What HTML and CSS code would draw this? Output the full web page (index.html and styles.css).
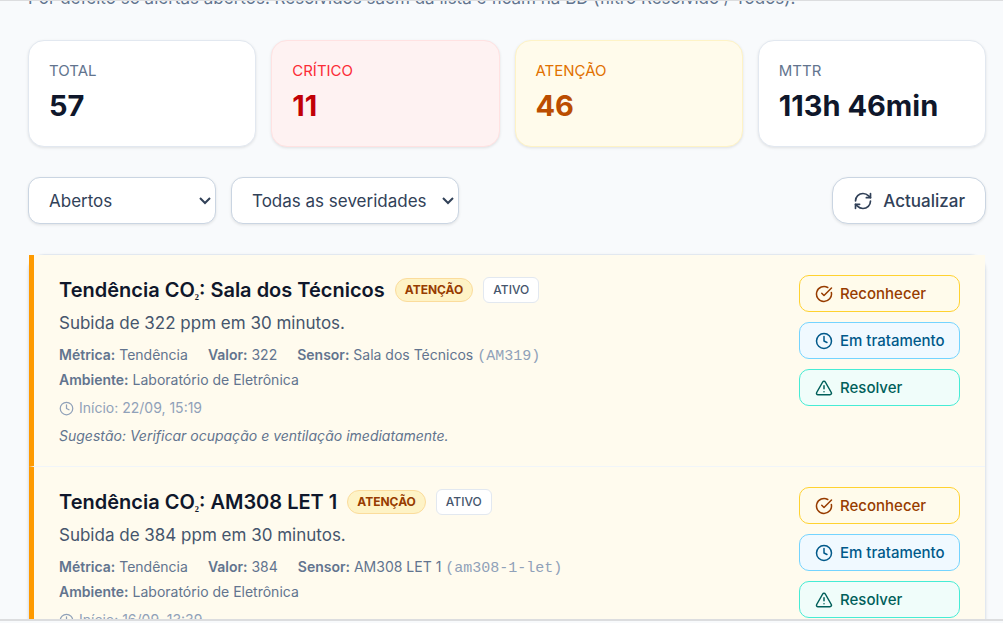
FILE: index.html
```html
<!DOCTYPE html>
<html lang="pt">
<head>
    <meta charset="UTF-8">
    <meta name="viewport" content="width=device-width, initial-scale=1.0">
    <title>Alertas</title>
    <link rel="stylesheet" href="styles.css">
</head>
<body>
    <svg class="sprite" aria-hidden="true">
        <symbol id="i-refresh" viewBox="0 0 24 24">
            <path d="M3 12a9 9 0 0 1 9-9 9.75 9.75 0 0 1 6.74 2.74L21 8"/>
            <path d="M21 3v5h-5"/>
            <path d="M21 12a9 9 0 0 1-9 9 9.75 9.75 0 0 1-6.74-2.74L3 16"/>
            <path d="M8 16H3v5"/>
        </symbol>
        <symbol id="i-clock" viewBox="0 0 24 24">
            <circle cx="12" cy="12" r="10"/>
            <path d="M12 6v6l4 2"/>
        </symbol>
        <symbol id="i-check" viewBox="0 0 24 24">
            <path d="M21.801 10A10 10 0 1 1 17 3.335"/>
            <path d="m9 11 3 3L22 4"/>
        </symbol>
        <symbol id="i-alert" viewBox="0 0 24 24">
            <path d="m21.73 18-8-14a2 2 0 0 0-3.48 0l-8 14A2 2 0 0 0 4 21h16a2 2 0 0 0 1.73-3"/>
            <path d="M12 9v4"/>
            <path d="M12 17h.01"/>
        </symbol>
    </svg>

    <main class="page">
        <p class="intro">Por defeito só alertas abertos. Resolvidos saem da lista e ficam na BD (filtro Resolvido / Todos).</p>

        <section class="stats">
            <div class="stat">
                <div class="stat-label">TOTAL</div>
                <div class="stat-value">57</div>
            </div>
            <div class="stat critical">
                <div class="stat-label">CRÍTICO</div>
                <div class="stat-value">11</div>
            </div>
            <div class="stat warning">
                <div class="stat-label">ATENÇÃO</div>
                <div class="stat-value">46</div>
            </div>
            <div class="stat">
                <div class="stat-label">MTTR</div>
                <div class="stat-value">113h 46min</div>
            </div>
        </section>

        <div class="filters">
            <select class="select-state" aria-label="Estado">
                <option>Abertos</option>
                <option>Resolvido</option>
                <option>Todos</option>
            </select>
            <select class="select-severity" aria-label="Severidade">
                <option>Todas as severidades</option>
                <option>Crítico</option>
                <option>Atenção</option>
            </select>
            <button type="button" class="refresh"><svg><use href="#i-refresh"/></svg>Actualizar</button>
        </div>

        <section class="alerts">
            <article class="alert">
                <div class="alert-body">
                    <div class="alert-head">
                        <h3>Tendência CO<span class="sub">₂</span>: Sala dos Técnicos</h3>
                        <span class="badge severity">ATENÇÃO</span>
                        <span class="badge state">ATIVO</span>
                    </div>
                    <p class="message">Subida de 322 ppm em 30 minutos.</p>
                    <div class="details">
                        <span><b>Métrica:</b> Tendência</span>
                        <span><b>Valor:</b> 322</span>
                        <span><b>Sensor:</b> Sala dos Técnicos <code>(AM319)</code></span>
                        <span><b>Ambiente:</b> Laboratório de Eletrônica</span>
                    </div>
                    <div class="started"><svg><use href="#i-clock"/></svg>Início: 22/09, 15:19</div>
                    <p class="hint">Sugestão: Verificar ocupação e ventilação imediatamente.</p>
                </div>
                <div class="actions">
                    <button type="button" class="ack"><svg><use href="#i-check"/></svg>Reconhecer</button>
                    <button type="button" class="progress"><svg><use href="#i-clock"/></svg>Em tratamento</button>
                    <button type="button" class="resolve"><svg><use href="#i-alert"/></svg>Resolver</button>
                </div>
            </article>

            <article class="alert">
                <div class="alert-body">
                    <div class="alert-head">
                        <h3>Tendência CO<span class="sub">₂</span>: AM308 LET 1</h3>
                        <span class="badge severity">ATENÇÃO</span>
                        <span class="badge state">ATIVO</span>
                    </div>
                    <p class="message">Subida de 384 ppm em 30 minutos.</p>
                    <div class="details">
                        <span><b>Métrica:</b> Tendência</span>
                        <span><b>Valor:</b> 384</span>
                        <span><b>Sensor:</b> AM308 LET 1 <code>(am308-1-let)</code></span>
                        <span><b>Ambiente:</b> Laboratório de Eletrônica</span>
                    </div>
                    <div class="started"><svg><use href="#i-clock"/></svg>Início: 16/09, 13:39</div>
                    <p class="hint">Sugestão: Verificar ocupação e ventilação imediatamente.</p>
                </div>
                <div class="actions">
                    <button type="button" class="ack"><svg><use href="#i-check"/></svg>Reconhecer</button>
                    <button type="button" class="progress"><svg><use href="#i-clock"/></svg>Em tratamento</button>
                    <button type="button" class="resolve"><svg><use href="#i-alert"/></svg>Resolver</button>
                </div>
            </article>
        </section>
    </main>
</body>
</html>
```
FILE: styles.css
```css
*{
    box-sizing: border-box;
    margin: 0;
}
body{
    height: 100vh;
    padding-bottom: 2px;
    overflow: hidden;
    background: #f8fafc;
    color: #0f172b;
    font-family: Inter, "Liberation Sans", sans-serif;
    font-size: 17px;
}
svg{
    flex: none;
    fill: none;
    stroke: currentColor;
    stroke-width: 2;
    stroke-linecap: round;
    stroke-linejoin: round;
}
.sprite{
    display: none;
}
.page{
    height: 100%;
    overflow: hidden;
    padding: 0 17px 0 28px;
    border-top: 1px solid #dcdddf;
    border-bottom: 2px solid #dcdddf;
}
.intro{
    margin-top: -15px;
    line-height: 24px;
    color: #62748e;
}

/* summary cards */
.stats{
    display: grid;
    grid-template-columns: repeat(4, 1fr);
    gap: 15px;
    margin-top: 30px;
}
.stat{
    padding: 20px;
    border: 1px solid #e2e8f0;
    border-radius: 16px;
    background: #fff;
    box-shadow: 0 1px 3px rgba(0, 0, 0, 0.1);
}
.stat-label{
    font-size: 15px;
    line-height: 20px;
    color: #62748e;
}
.stat-value{
    margin-top: 5px;
    font-size: 29px;
    font-weight: 700;
    line-height: 40px;
}
.critical{
    background: #fef2f2;
    border-color: #ffe2e2;
}
.critical .stat-label{
    color: #fb2c36;
}
.critical .stat-value{
    color: #c10007;
}
.warning{
    background: #fffbeb;
    border-color: #fef3c6;
}
.warning .stat-label{
    color: #e17100;
}
.warning .stat-value{
    color: #bb4d00;
}

/* filters */
.filters{
    display: flex;
    gap: 15px;
    margin: 30px 0;
}
select, button{
    font-family: inherit;
    white-space: nowrap;
    cursor: pointer;
}
select, .refresh{
    height: 47px;
    border: 1px solid #cad5e2;
    border-radius: 12px;
    background-color: #fff;
    color: #314158;
    font-size: 17px;
    box-shadow: 0 1px 3px rgba(0, 0, 0, 0.1);
}
select{
    appearance: none;
    padding-left: 20px;
    background-image: url("data:image/svg+xml,%3Csvg xmlns='http://www.w3.org/2000/svg' width='12' height='8' fill='none' stroke='%23314158' stroke-width='2'%3E%3Cpath d='M1 1l5 5 5-5'/%3E%3C/svg%3E");
    background-repeat: no-repeat;
    background-position: right 4px center;
}
.select-state{
    width: 188px;
}
.select-severity{
    width: 228px;
}
.refresh{
    display: flex;
    align-items: center;
    gap: 10px;
    margin-left: auto;
    padding: 0 20px;
    border-radius: 16px;
    font-weight: 500;
}
.refresh svg{
    width: 20px;
    height: 20px;
}

/* alert list */
.alerts{
    border: 1px solid #e2e8f0;
    border-radius: 16px;
    background: #fff;
    box-shadow: 0 1px 3px rgba(0, 0, 0, 0.1);
}
.alert{
    display: flex;
    gap: 20px;
    padding: 20px 25px;
    border-left: 5px solid #fe9a00;
    background: #fffbee;
}
.alert + .alert{
    border-top: 1px solid #f1f5f9;
}
.alert-body{
    flex: 1;
    min-width: 0;
}
.alert-head{
    display: flex;
    align-items: center;
    gap: 10px;
}
h3{
    font-size: 20px;
    font-weight: 600;
    line-height: 30px;
}
.sub{
    font-family: "Liberation Serif", serif;
    font-size: 14px;
    line-height: 20px;
}
.badge{
    padding: 0 9px;
    border: 1px solid;
    font-size: 12px;
}
.severity{
    border-color: #fbdc9c;
    border-radius: 12px;
    background: #fef3c6;
    color: #973c00;
    font-weight: 700;
    line-height: 22px;
}
.state{
    border-color: #e2e8f0;
    border-radius: 6px;
    background: #fff;
    color: #45556c;
    font-weight: 500;
    line-height: 24px;
}
.message{
    margin-top: 5px;
    line-height: 27px;
    color: #45556c;
}
.details{
    display: flex;
    flex-wrap: wrap;
    gap: 5px 20px;
    max-width: 600px;
    margin-top: 8px;
    font-size: 14px;
    line-height: 20px;
    color: #62748e;
}
.details span:last-child{
    flex-basis: 100%;
}
.details b{
    font-weight: 600;
}
code{
    font-family: "Liberation Mono", monospace;
    font-size: 15px;
    line-height: 16px;
    color: #90a1b9;
}
.started{
    display: flex;
    align-items: center;
    gap: 5px;
    margin-top: 8px;
    font-size: 14px;
    line-height: 20px;
    color: #90a1b9;
}
.started svg{
    width: 15px;
    height: 15px;
}
.hint{
    margin-top: 8px;
    font-size: 14px;
    font-style: italic;
    line-height: 20px;
    color: #62748e;
}
.actions{
    display: flex;
    flex-direction: column;
    gap: 10px;
    width: 161px;
}
.actions button{
    display: flex;
    align-items: center;
    gap: 7px;
    height: 37px;
    padding: 0 15px;
    border: 1px solid;
    border-radius: 10px;
    font-size: 15px;
    font-weight: 500;
}
.actions svg{
    width: 18px;
    height: 18px;
}
.actions .ack{
    border-color: #ffd230;
    background: #fffbeb;
    color: #973c00;
}
.actions .progress{
    border-color: #74d4ff;
    background: #f0f9ff;
    color: #00598a;
}
.actions .resolve{
    border-color: #46ecd5;
    background: #f0fdfa;
    color: #005f5a;
}
```
